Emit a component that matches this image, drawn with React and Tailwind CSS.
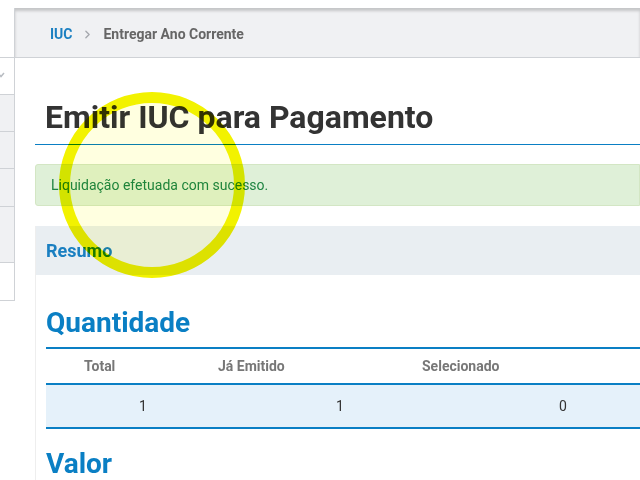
import React from "react";
import { ChevronRight } from "lucide-react";

const font = { fontFamily: "Roboto, 'Noto Sans', sans-serif" };

const sideRows = [
  { h: "h-[37px]", bg: "bg-white", chevron: true },
  { h: "h-[37px]", bg: "bg-[#f0f1f3]" },
  { h: "h-[37px]", bg: "bg-[#f0f1f3]" },
  { h: "h-[38px]", bg: "bg-[#f0f1f3]" },
  { h: "h-[56px]", bg: "bg-[#f0f1f3]" },
  { h: "h-[37px]", bg: "bg-white" },
];

export default function App() {
  return (
    <div className="relative w-[640px] h-[480px] overflow-hidden bg-white pt-[8px]" style={font}>
      <div className="flex items-start">
        {/* sidebar stub */}
        <div className="w-[15px] shrink-0 border-r border-b border-[#cfd2d6] bg-white">
          <div className="h-[50px] border-b border-[#cfd2d6]" />
          {sideRows.map((r, i) => (
            <div key={i} className={`${r.h} ${r.bg} border-b border-[#cfd2d6] last:border-b-0 relative`}>
              {r.chevron && (
                <svg className="absolute left-[-3px] top-[14px]" width="8" height="6" viewBox="0 0 8 6">
                  <path d="M1 1 L4 4.5 L7 1" fill="none" stroke="#b8bcc2" strokeWidth="1.5" />
                </svg>
              )}
            </div>
          ))}
        </div>

        {/* main */}
        <div className="flex-1 min-w-0">
          <div className="h-[50px] bg-[#f0f1f3] border-b border-[#cfd2d6] shadow-[inset_0_3px_3px_rgba(0,0,0,0.18)] flex items-center pt-[3px] pl-[35px] text-[14px] font-bold">
            <span className="text-[#1a7fc1]">IUC</span>
            <ChevronRight size={13} strokeWidth={2.5} className="mx-[9px] text-[#a5a8ad]" />
            <span className="text-[#666]">Entregar Ano Corrente</span>
          </div>

          <div className="pl-[20px]">
            <h1 className="pt-[40px] pl-[10px] pb-[8px] text-[32px] leading-[38px] font-bold text-[#333] border-b border-[#0a7fc4]">
              Emitir IUC para Pagamento
            </h1>

            <div className="mt-[19px] h-[42px] flex items-center pl-[15px] bg-[#dff0d8] border border-[#d3e6c4] rounded-l-[3px] text-[14px] text-[#1f8442]">
              Liquidação efetuada com sucesso.
            </div>

            <div className="mt-[20px] border-l border-[#eeeeee]">
              <div className="h-[49px] flex items-center pl-[10px] bg-[#e9eef2] text-[18px] font-bold text-[#1a7fc1]">
                Resumo
              </div>

              <div className="pl-[10px]">
                <h2 className="pt-[30px] pb-[6px] text-[28px] leading-[36px] font-bold text-[#0a7fc4]">Quantidade</h2>
                <div className="border-t-2 border-b-2 border-[#0a7fc4]">
                  <div className="grid grid-cols-[144px_210px_1fr] h-[36px] items-center text-[14px] font-bold text-[#777] border-b-2 border-[#0a7fc4]">
                    <div className="pl-[38px]">Total</div>
                    <div className="pl-[28px]">Já Emitido</div>
                    <div className="pl-[22px]">Selecionado</div>
                  </div>
                  <div className="grid grid-cols-[144px_210px_1fr] h-[42px] items-center text-[14px] text-[#333] bg-[#e5f1fa]">
                    <div className="pl-[93px]">1</div>
                    <div className="pl-[146px]">1</div>
                    <div className="pl-[159px]">0</div>
                  </div>
                </div>
                <h2 className="pt-[17px] text-[28px] leading-[36px] font-bold text-[#0a7fc4]">Valor</h2>
              </div>
            </div>
          </div>
        </div>
      </div>

      {/* cursor highlight, multiplied so the text beneath stays legible */}
      <div className="absolute left-[59px] top-[92px] w-[186px] h-[186px] rounded-full bg-[#ffffe0] border-[11px] border-[#f2f200] mix-blend-multiply pointer-events-none" />
    </div>
  );
}
